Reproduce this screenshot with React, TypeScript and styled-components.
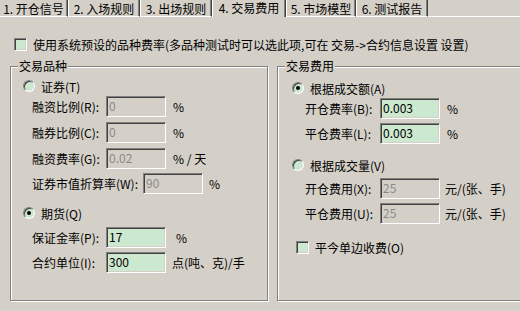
import styled, { createGlobalStyle } from "styled-components";

const GlobalStyle = createGlobalStyle`
  html, body {
    margin: 0;
    padding: 0;
    background: #d4d0c8;
  }
  body {
    font-family: "Noto Sans CJK SC", "Liberation Sans", sans-serif;
    font-size: 12px;
    color: #000;
  }
`;

const tabs = [
  { label: "1. 开仓信号", w: 68 },
  { label: "2. 入场规则", w: 72 },
  { label: "3. 出场规则", w: 72 },
  { label: "4. 交易费用", w: 74, active: true },
  { label: "5. 市场模型", w: 70 },
  { label: "6. 测试报告", w: 72 },
];

const Check = ({ checked }: { checked?: boolean }) => (
  <CheckBox>{checked ? "✓" : null}</CheckBox>
);

const Radio = ({ checked }: { checked?: boolean }) => <RadioDot $on={!!checked} />;

type FieldProps = {
  label: string;
  value: string;
  unit: string;
  disabled?: boolean;
  labelW: number;
  mt: number;
  unitGap?: number;
};

const Field = ({ label, value, unit, disabled, labelW, mt, unitGap = 7 }: FieldProps) => (
  <FieldRow $mt={mt}>
    <Label $w={labelW}>{label}</Label>
    <Input readOnly value={value} $off={!!disabled} />
    <Unit $gap={unitGap}>{unit}</Unit>
  </FieldRow>
);

const App = () => {
  return (
    <Page>
      <GlobalStyle />
      <TabBar>
        {tabs.map((t) => (
          <Tab key={t.label} $w={t.w} $active={!!t.active}>
            {t.label}
          </Tab>
        ))}
        <TabFill />
      </TabBar>

      <TopOption>
        <Check />
        <span>使用系统预设的品种费率(多品种测试时可以选此项,可在 交易-&gt;合约信息设置 设置)</span>
      </TopOption>

      <Groups>
        <Group $w={258}>
          <Legend>交易品种</Legend>
          <GroupBody $pl={12}>
            <OptionRow $mt={7}>
              <Radio />
              <span>证券(T)</span>
            </OptionRow>
            <Indent $ml={9}>
              <Field label="融资比例(R):" value="0" unit="%" disabled labelW={74} mt={3} />
              <Field label="融券比例(C):" value="0" unit="%" disabled labelW={74} mt={5} />
              <Field label="融资费率(G):" value="0.02" unit="% / 天" disabled labelW={74} mt={5} />
              <Field label="证券市值折算率(W):" value="90" unit="%" disabled labelW={111} mt={4} unitGap={6} />
            </Indent>
            <OptionRow $mt={12}>
              <Radio checked />
              <span>期货(Q)</span>
            </OptionRow>
            <Indent $ml={9}>
              <Field label="保证金率(P):" value="17" unit="%" labelW={74} mt={7} unitGap={10} />
              <Field label="合约单位(I):" value="300" unit="点(吨、克)/手" labelW={74} mt={4} unitGap={6} />
            </Indent>
          </GroupBody>
        </Group>

        <Group $w={262}>
          <Legend>交易费用</Legend>
          <GroupBody $pl={14}>
            <OptionRow $mt={9}>
              <Radio checked />
              <span>根据成交额(A)</span>
            </OptionRow>
            <Indent $ml={13}>
              <Field label="开仓费率(B):" value="0.003" unit="%" labelW={75} mt={3} />
              <Field label="平仓费率(L):" value="0.003" unit="%" labelW={75} mt={4} />
            </Indent>
            <OptionRow $mt={14}>
              <Radio />
              <span>根据成交量(V)</span>
            </OptionRow>
            <Indent $ml={13}>
              <Field label="开仓费用(X):" value="25" unit="元/(张、手)" disabled labelW={75} mt={6} unitGap={5} />
              <Field label="平仓费用(U):" value="25" unit="元/(张、手)" disabled labelW={75} mt={4} unitGap={5} />
            </Indent>
            <OptionRow $mt={16} $ml={4}>
              <Check />
              <span>平今单边收费(O)</span>
            </OptionRow>
          </GroupBody>
        </Group>
      </Groups>
    </Page>
  );
};

export default App;

// 页面与标签栏
const Page = styled.div`
  width: 520px;
  height: 311px;
  overflow: hidden;
  background: #d4d0c8;
`;

const TabBar = styled.div`
  display: flex;
  height: 17px;
`;

const Tab = styled.div<{ $w: number; $active: boolean }>`
  flex: 0 0 ${(p) => p.$w}px;
  box-sizing: border-box;
  height: 17px;
  text-align: center;
  line-height: ${(p) => (p.$active ? "15px" : "17px")};
  white-space: nowrap;
  border-left: 1px solid #fff;
  border-right: 1px solid #404040;
  box-shadow: inset -1px 0 0 #808080;
  border-bottom: ${(p) => (p.$active ? "none" : "1px solid #fff")};
  &:first-child {
    border-left: none;
  }
`;

const TabFill = styled.div`
  flex: 1;
  border-bottom: 1px solid #fff;
`;

const TopOption = styled.label`
  display: flex;
  align-items: center;
  gap: 6px;
  height: 12px;
  margin: 21px 0 0 14px;
  white-space: nowrap;
`;

// 分组框
const Groups = styled.div`
  display: flex;
  gap: 9px;
  width: 540px;
  margin: 16px 0 0 10px;
`;

const Group = styled.div<{ $w: number }>`
  flex: 0 0 ${(p) => p.$w}px;
  box-sizing: border-box;
  height: 235px;
  border: 1px solid #808080;
  box-shadow: inset 1px 1px 0 #fff, 1px 1px 0 #fff;
`;

const Legend = styled.div`
  width: fit-content;
  height: 12px;
  margin: -7px 0 0 7px;
  padding: 0 1px;
  line-height: 12px;
  background: #d4d0c8;
`;

const GroupBody = styled.div<{ $pl: number }>`
  padding-left: ${(p) => p.$pl}px;
`;

const OptionRow = styled.div<{ $mt: number; $ml?: number }>`
  display: flex;
  align-items: center;
  gap: 6px;
  height: 14px;
  margin-top: ${(p) => p.$mt}px;
  margin-left: ${(p) => p.$ml ?? 0}px;
  white-space: nowrap;
`;

const Indent = styled.div<{ $ml: number }>`
  display: flex;
  flex-direction: column;
  margin-left: ${(p) => p.$ml}px;
`;

const FieldRow = styled.div<{ $mt: number }>`
  display: flex;
  align-items: center;
  height: 21px;
  margin-top: ${(p) => p.$mt}px;
  white-space: nowrap;
`;

const Label = styled.span<{ $w: number }>`
  flex: 0 0 ${(p) => p.$w}px;
`;

const Input = styled.input<{ $off: boolean }>`
  box-sizing: border-box;
  width: 60px;
  height: 21px;
  margin: 0;
  padding: 0 2px 3px;
  font: 12px "Noto Sans CJK SC", "Liberation Sans", sans-serif;
  color: ${(p) => (p.$off ? "#8a8a8a" : "#000")};
  background: ${(p) => (p.$off ? "#d4d0c8" : "#cce8cf")};
  border: 1px solid;
  border-color: #808080 #fff #fff #808080;
  box-shadow: inset 1px 1px 0 #404040, inset -1px -1px 0 #d4d0c8;
  outline: none;
`;

const Unit = styled.span<{ $gap: number }>`
  margin-left: ${(p) => p.$gap}px;
`;

// 单选与复选
const RadioDot = styled.span<{ $on: boolean }>`
  position: relative;
  flex: 0 0 12px;
  box-sizing: border-box;
  width: 12px;
  height: 12px;
  border-radius: 50%;
  border: 1px solid;
  border-color: #808080 #fff #fff #808080;
  background: #cce8cf;
  box-shadow: inset 1px 1px 0 #404040;
  &::after {
    content: "";
    display: ${(p) => (p.$on ? "block" : "none")};
    position: absolute;
    left: 3px;
    top: 3px;
    width: 4px;
    height: 4px;
    border-radius: 50%;
    background: #000;
  }
`;

const CheckBox = styled.span`
  flex: 0 0 13px;
  box-sizing: border-box;
  width: 13px;
  height: 13px;
  border: 1px solid;
  border-color: #808080 #fff #fff #808080;
  background: #cce8cf;
  box-shadow: inset 1px 1px 0 #404040, inset -1px -1px 0 #d4d0c8;
  font-size: 10px;
  line-height: 11px;
  text-align: center;
`;
